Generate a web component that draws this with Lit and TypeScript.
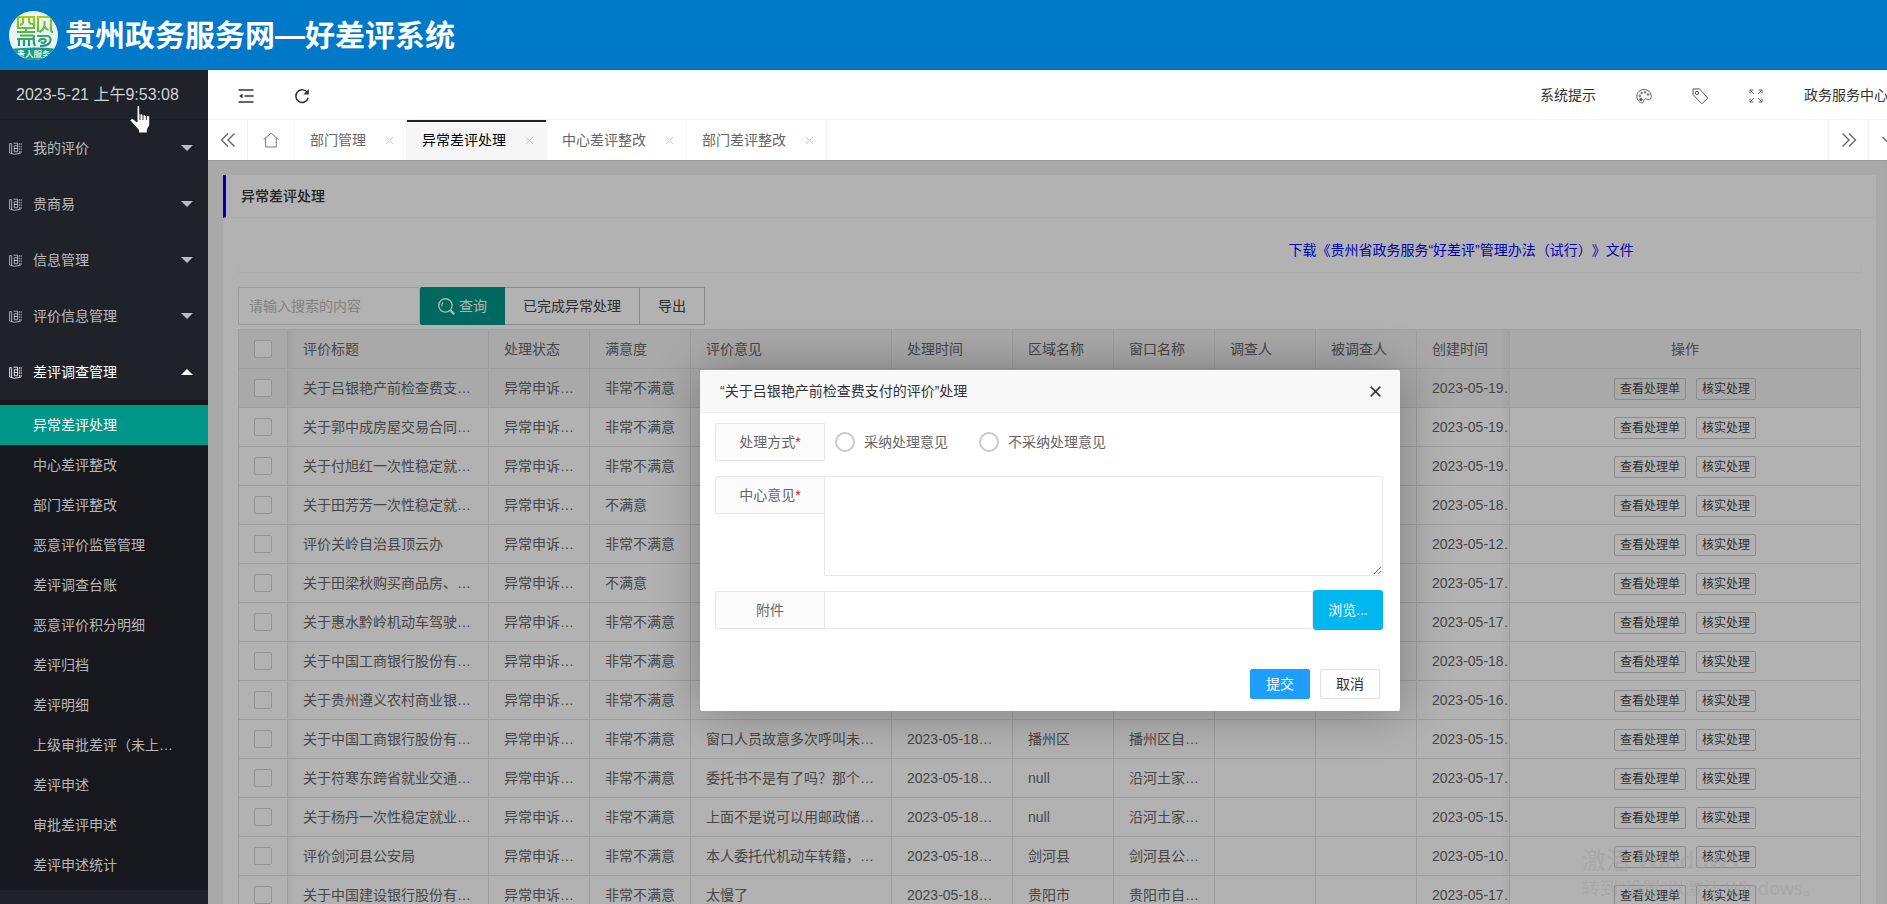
import { LitElement, html, css, svg } from "lit";
import { customElement, state } from "lit/decorators.js";
import { classMap } from "lit/directives/class-map.js";

interface Row {
  title: string;
  status: string;
  level: string;
  opinion: string;
  handled: string;
  area: string;
  windowName: string;
  created: string;
}

const row = (
  title: string,
  level: string,
  created: string,
  opinion = "",
  handled = "",
  area = "",
  windowName = ""
): Row => ({ title, status: "异常申诉…", level, opinion, handled, area, windowName, created });

const ROWS: Row[] = [
  row("关于吕银艳产前检查费支…", "非常不满意", "2023-05-19…"),
  row("关于郭中成房屋交易合同…", "非常不满意", "2023-05-19…"),
  row("关于付旭红一次性稳定就…", "非常不满意", "2023-05-19…"),
  row("关于田芳芳一次性稳定就…", "不满意", "2023-05-18…"),
  row("评价关岭自治县顶云办", "非常不满意", "2023-05-12…"),
  row("关于田梁秋购买商品房、…", "不满意", "2023-05-17…"),
  row("关于惠水黔岭机动车驾驶…", "非常不满意", "2023-05-17…"),
  row("关于中国工商银行股份有…", "非常不满意", "2023-05-18…"),
  row("关于贵州遵义农村商业银…", "非常不满意", "2023-05-16…"),
  row("关于中国工商银行股份有…", "非常不满意", "2023-05-15…", "窗口人员故意多次呼叫未…", "2023-05-18…", "播州区", "播州区自…"),
  row("关于符寒东跨省就业交通…", "非常不满意", "2023-05-17…", "委托书不是有了吗？那个…", "2023-05-18…", "null", "沿河土家…"),
  row("关于杨丹一次性稳定就业…", "非常不满意", "2023-05-15…", "上面不是说可以用邮政储…", "2023-05-18…", "null", "沿河土家…"),
  row("评价剑河县公安局", "非常不满意", "2023-05-10…", "本人委托代机动车转籍，…", "2023-05-18…", "剑河县", "剑河县公…"),
  row("关于中国建设银行股份有…", "非常不满意", "2023-05-17…", "太慢了", "2023-05-18…", "贵阳市", "贵阳市自…"),
];

const COLUMNS = ["评价标题", "处理状态", "满意度", "评价意见", "处理时间", "区域名称", "窗口名称", "调查人", "被调查人", "创建时间"];
const GROUPS = ["我的评价", "贵商易", "信息管理", "评价信息管理", "差评调查管理"];
const SUBMENU = [
  "异常差评处理", "中心差评整改", "部门差评整改", "恶意评价监管管理", "差评调查台账", "恶意评价积分明细",
  "差评归档", "差评明细", "上级审批差评（未上…", "差评申述", "审批差评申述", "差评申述统计",
];
const TABS = ["部门管理", "异常差评处理", "中心差评整改", "部门差评整改"];

const icon = (size: number, body: unknown, width = 1.2) => html`<svg
  width=${size} height=${size} viewBox="0 0 16 16" fill="none" stroke="currentColor"
  stroke-width=${width} aria-hidden="true">${body}</svg>`;

const bookIcon = icon(13, svg`<path d="M.8 2v11.500M3.300 2.500v11.500M.8 2h2.500M.8 13.500l6 1.700 8-1.700"/><path d="M5.500 1.500h5v10.500H6.500V4.500h4M6.500 8h4"/><path d="M12.800 1.500v12.500M15 1.500v12.500" stroke-dasharray="2 1.200"/>`, 1.1);
const shrinkIcon = icon(16, svg`<path d="M.5 2h15M6.500 8h9M.5 14h15"/><path d="M4.500 5.500v5L1.200 8z" fill="currentColor" stroke="none"/>`, 1.4);
const refreshIcon = icon(16, svg`<path d="M13.600 5A6.300 6.300 0 1 0 14.200 9.800"/><path d="M14.800 1v5.500H9.300z" fill="currentColor" stroke="none"/>`, 1.5);
const leftIcon = icon(16, svg`<path d="M8 1.500L1.500 8 8 14.500M14.500 1.500L8 8l6.500 6.500"/>`, 1.4);
const rightIcon = icon(16, svg`<path d="M8 1.500L14.500 8 8 14.500M1.500 1.500L8 8l-6.500 6.500"/>`, 1.4);
const downIcon = icon(16, svg`<path d="M1.500 5L8 11.500 14.500 5"/>`, 1.4);
const homeIcon = icon(16, svg`<path d="M.5 7.500L8 1.200l7.500 6.300M2.700 6v9h10.600V6"/>`, 0.9);
const paletteIcon = icon(16, svg`<path d="M8 1.500C4 1.500.8 4.500.8 8.500S4 15 6.200 14.800c1.800-.2 1.200-2 1.800-3 .7-1.200 2-.9 3.300-.4 2 .8 3.900.2 3.900-2.900 0-4-3.200-7-7.200-7z"/><circle cx="3.800" cy="8" r=".8"/><circle cx="5.600" cy="5" r=".8"/><circle cx="9" cy="4.300" r=".8"/><circle cx="12" cy="6.500" r=".8"/><circle cx="4.800" cy="11.500" r="1.200" fill="currentColor"/>`, 1);
const tagIcon = icon(16, svg`<path d="M1 1l6.500-.2L15.300 9.500a1 1 0 0 1 0 1.200l-4.800 4.600a1 1 0 0 1-1.300 0L1 6.500z"/><circle cx="5" cy="5" r="1.700"/>`, 1);
const fullIcon = icon(16, svg`<path d="M2 5.500V2h3.500M2 2l4 4M10.500 2H14v3.500M14 2l-4 4M2 10.500V14h3.500M2 14l4-4M10.500 14H14v-3.500M14 14l-4-4"/>`, 0.9);
const searchIcon = icon(17, svg`<circle cx="7" cy="7" r="6.300"/><path d="M3.800 8A3.300 3.300 0 0 1 5 4.200" stroke-width="1"/><path d="M11.700 11.700l3.500 3.500" stroke-width="2.200"/>`, 1.3);
const closeIcon = icon(13, svg`<path d="M2 2l12 12M14 2L2 14"/>`, 1.8);
const smallCloseIcon = icon(9, svg`<path d="M1.500 1.500l13 13M14.500 1.500l-13 13"/>`, 1.6);

@customElement("app-root")
export class AppRoot extends LitElement {
  @state() private activeItem = 0;
  @state() private activeTab = 1;
  @state() private dialogOpen = true;

  static styles = css`
    :host {
      display: flex;
      flex-direction: column;
      height: 100vh;
      overflow: hidden;
      font: 14px/20px "Liberation Sans", "Noto Sans CJK SC", sans-serif;
      text-spacing-trim: space-all;
      color: #666;
      background: #f2f2f2;
    }
    *, *::before, *::after { box-sizing: border-box; }
    button, input, textarea { font: inherit; color: inherit; margin: 0; }
    button { cursor: pointer; padding: 0; border: 0; background: none; }
    a { color: inherit; text-decoration: none; }
    ul { list-style: none; margin: 0; padding: 0; }
    svg { display: block; flex: none; }

    .brand {
      flex: none;
      display: flex;
      align-items: center;
      gap: 6px;
      height: 70px;
      padding: 2px 0 0 9px;
      background: #0079c8;
      color: #fff;
    }
    .brand h1 { margin: 0; font-size: 30px; line-height: 40px; font-weight: 700; }
    .shell { flex: 1; display: flex; min-height: 0; }

    .side { flex: none; width: 208px; overflow: hidden; background: #20222a; color: rgba(255, 255, 255, 0.7); }
    .clock {
      height: 50px;
      padding-left: 16px;
      border-bottom: 1px solid #1b1d23;
      font-size: 16px;
      line-height: 49px;
      color: #d2d2d4;
    }
    .group {
      display: flex;
      align-items: center;
      gap: 11px;
      width: 100%;
      height: 56px;
      padding: 0 15px 0 9px;
      text-align: left;
    }
    .group span { flex: 1; }
    .group.open { color: #fff; }
    .caret { width: 12px; height: 6px; background: currentColor; clip-path: polygon(0 0, 100% 0, 50% 100%); }
    .open .caret { clip-path: polygon(50% 0, 100% 100%, 0 100%); }
    .submenu { padding: 5px 0; background: #17181d; }
    .submenu a { display: block; height: 40px; padding-left: 33px; line-height: 40px; white-space: nowrap; }
    .submenu a.active { background: #009688; color: #fff; }

    .main { flex: 1; display: flex; flex-direction: column; min-width: 0; overflow: hidden; }
    .toolbar {
      flex: none;
      display: flex;
      height: 50px;
      border-bottom: 1px solid #f4f4f4;
      background: #fff;
      color: #333;
    }
    .tool { display: flex; align-items: center; padding: 0 20px; white-space: nowrap; line-height: 50px; }
    .tools-left { display: flex; padding: 2px 0 0 10px; }
    .tools-right { display: flex; margin: 0 -1px 0 auto; }
    .tool.user { padding-right: 0; }
    .tools-right button { padding-top: 2px; color: #555; }

    .tabs { flex: none; display: flex; height: 40px; background: #fff; }
    .cell { flex: none; display: grid; place-items: center; width: 40px; border-right: 1px solid #f4f4f4; }
    .cell.home { width: 47px; }
    .cell.next { margin-left: auto; width: 41px; border-left: 1px solid #f4f4f4; }
    .cell.more { margin-right: -22px; }
    .tab {
      display: flex;
      align-items: center;
      gap: 19px;
      padding: 0 12px 0 15px;
      border-right: 1px solid #f4f4f4;
      white-space: nowrap;
    }
    .tab svg { color: #c2c2c2; }
    .tab.active { background: #f6f6f6; color: #000; box-shadow: inset 0 2px #20222a; }

    .content { position: relative; flex: 1; min-height: 0; overflow: hidden; padding: 15px 11px 0 15px; }
    .panel { background: #fff; min-height: 900px; border-radius: 2px; }
    .panel h2 {
      height: 43px;
      margin: 0;
      padding-left: 15px;
      border-left: 3px solid #00f;
      border-bottom: 1px solid #f6f6f6;
      font-size: 14px;
      font-weight: 500;
      line-height: 42px;
      color: #333;
    }
    .body { padding: 11px 15px; }
    .notice {
      height: 43px;
      margin-bottom: 15px;
      padding-right: 14%;
      border-radius: 2px;
      box-shadow: 0 1px 2px rgba(0, 0, 0, 0.05);
      line-height: 43px;
      text-align: right;
      color: #00f;
    }
    .filter { display: flex; height: 38px; margin-bottom: 4px; }
    .filter input { width: 182px; padding: 0 10px; border: 1px solid #e0e0e0; border-radius: 2px; background: none; outline: 0; }
    .filter input::placeholder { color: #bbb; opacity: 1; }
    .filter button { display: flex; align-items: center; gap: 4px; padding: 0 18px; border: 1px solid #c9c9c9; color: #444; }
    .filter button.query { border: 0; border-radius: 2px 0 0 2px; background: #009688; color: #fff; }
    .filter button.plain { border-left: 0; border-right: 0; }

    table {
      width: 100%;
      table-layout: fixed;
      border-spacing: 0;
      border: solid #e2e2e2;
      border-width: 1px 0 0 1px;
    }
    th, td {
      height: 39px;
      padding: 0 15px;
      border: solid #e2e2e2;
      border-width: 0 1px 1px 0;
      font-weight: 400;
      text-align: left;
      white-space: nowrap;
      overflow: hidden;
    }
    thead, .hover { background: #f2f2f2; }
    td:nth-child(2), th:nth-child(2) { background: linear-gradient(to right, rgba(0, 0, 0, 0.04), transparent 8px) no-repeat; }
    td:nth-child(11), th:nth-child(11) { padding-right: 0; background: linear-gradient(to left, rgba(0, 0, 0, 0.04), transparent 8px) no-repeat; }
    .c50 { width: 49px; }
    .c90 { width: 93px; }
    .c100 { width: 101px; }
    .c120 { width: 121px; }
    .c200 { width: 201px; }
    th.ops { text-align: center; }
    .actions { display: flex; justify-content: center; gap: 10px; padding-top: 1px; }
    .actions button {
      height: 22px;
      padding: 0 5px;
      border: 1px solid #c9c9c9;
      border-radius: 2px;
      background: none;
      font-size: 12px;
      line-height: 20px;
      color: #444;
    }
    input[type="checkbox"] {
      appearance: none;
      display: block;
      width: 18px;
      height: 18px;
      border: 1px solid #d2d2d2;
      border-radius: 2px;
      background: #fff;
    }
    input[type="checkbox"]:checked { background: #009688; }

    .shade { position: absolute; inset: 0; background: rgba(0, 0, 0, 0.3); box-shadow: inset 0 2px 2px -1px rgba(0, 0, 0, 0.1); }
    .dialog {
      position: absolute;
      top: 210px;
      left: 492px;
      width: 700px;
      border-radius: 2px;
      background: #fff;
      box-shadow: 1px 1px 50px rgba(0, 0, 0, 0.3);
    }
    .dialog header {
      display: flex;
      align-items: center;
      justify-content: space-between;
      height: 43px;
      padding: 0 18px 0 20px;
      border-bottom: 1px solid #eee;
      border-radius: 2px 2px 0 0;
      background: #f8f8f8;
      color: #333;
    }
    .form { display: flex; flex-direction: column; gap: 15px; padding: 10px 17px 0 15px; }
    .field { display: flex; align-items: flex-start; }
    .label {
      flex: none;
      width: 110px;
      height: 38px;
      border: 1px solid #e6e6e6;
      border-radius: 2px 0 0 2px;
      background: #fbfbfb;
      line-height: 36px;
      text-align: center;
    }
    .label i { color: #f00; font-style: normal; }
    .options { display: flex; gap: 31px; padding-left: 10px; }
    .option { display: flex; align-items: center; gap: 9px; height: 38px; }
    .option input {
      appearance: none;
      width: 20px;
      height: 20px;
      border: 2px solid #c9c9c9;
      border-radius: 50%;
    }
    .option input:checked { border-color: #5fb878; }
    .box { flex: 1; min-width: 0; height: 38px; margin-left: -1px; border: 1px solid #e6e6e6; border-radius: 0 2px 2px 0; background: #fff; outline: 0; }
    textarea.box { height: 100px; padding: 6px 10px; resize: vertical; }
    .browse { height: 40px; margin: -1px 0; padding: 0 15px; border-radius: 3px; background: #00b7ee; color: #fff; }
    .dialog footer { display: flex; justify-content: flex-end; gap: 10px; padding: 40px 20px 12px; }
    .dialog footer button { width: 60px; height: 30px; border: 1px solid #dedede; border-radius: 2px; color: #333; }
    .dialog footer .primary { border-color: #1e9fff; background: #1e9fff; color: #fff; }

    .watermark {
      position: absolute;
      right: 72px;
      bottom: 4px;
      width: 233px;
      font: 18px/24px "Noto Sans", "Noto Sans CJK SC", sans-serif;
      white-space: nowrap;
      color: rgba(160, 160, 160, 0.55);
      pointer-events: none;
    }
    .watermark strong { display: block; font-size: 24px; line-height: 32px; font-weight: 400; }
    .pointer { position: absolute; left: 129px; top: 104px; pointer-events: none; }
  `;

  private renderLogo() {
    return html`<svg width="50" height="50" viewBox="0 0 50 50" aria-hidden="true">
      <defs>
        <linearGradient id="leaf" gradientUnits="userSpaceOnUse" x1="0" y1="5" x2="0" y2="36">
          <stop offset="0" stop-color="#a9cc10" /><stop offset=".5" stop-color="#5db548" /><stop offset="1" stop-color="#129084" />
        </linearGradient>
        <clipPath id="disc"><circle cx="24.500" cy="24.500" r="24.500" /></clipPath>
      </defs>
      <g clip-path="url(#disc)">
        <rect width="50" height="50" fill="#eaf3f8" />
        <path d="M0 38q25-3 50 0v13H0z" fill="#1d9a80" />
        <g fill="none" stroke="url(#leaf)" stroke-width="2.200">
          <path d="M9 6h16v11H9zM14 6v5q0 2-3 3M20 6v4q0 3 4 3M17 17v4M8 21h18M11 24.500h13M8 28h17M10 28v7M15 28v7M20 28v7M25 24q-1 7 1 11" />
          <path d="M29 21V6h13v13q0 2 2 2M35.500 10v5q-1 4-5 6M35.500 15q1 3 4 4M28 25h11q4 2 2 6-2 4-10 4M30 31q1-4 5-3 3 1 1 3-2 2-4 0" />
        </g>
        <text x="24.500" y="46" text-anchor="middle" font-size="8.500" font-family="Noto Sans CJK SC" font-weight="500" fill="#fff">贵人服务</text>
      </g>
    </svg>`;
  }

  private renderSide() {
    return html`<nav class="side">
      <div class="clock">2023-5-21 上午9:53:08</div>
      ${GROUPS.map((name, i) => html`<button class=${classMap({ group: true, open: i === GROUPS.length - 1 })}>
        ${bookIcon}<span>${name}</span><i class="caret"></i>
      </button>`)}
      <ul class="submenu">
        ${SUBMENU.map((name, i) => html`<li><a href="#" class=${classMap({ active: i === this.activeItem })}
          @click=${(e: Event) => { e.preventDefault(); this.activeItem = i; }}>${name}</a></li>`)}
      </ul>
    </nav>`;
  }

  private renderBars() {
    return html`<div class="toolbar">
        <div class="tools-left">
          <button class="tool" aria-label="收起菜单">${shrinkIcon}</button>
          <button class="tool" aria-label="刷新">${refreshIcon}</button>
        </div>
        <div class="tools-right">
          <a class="tool" href="#">系统提示</a>
          <button class="tool" aria-label="主题">${paletteIcon}</button>
          <button class="tool" aria-label="便签">${tagIcon}</button>
          <button class="tool" aria-label="全屏">${fullIcon}</button>
          <a class="tool user" href="#">政务服务中心</a>
        </div>
      </div>
      <div class="tabs">
        <button class="cell" aria-label="向左">${leftIcon}</button>
        <button class="cell home" aria-label="主页">${homeIcon}</button>
        ${TABS.map((name, i) => html`<button class=${classMap({ tab: true, active: i === this.activeTab })}
          @click=${() => (this.activeTab = i)}>${name}${smallCloseIcon}</button>`)}
        <button class="cell next" aria-label="向右">${rightIcon}</button>
        <button class="cell more" aria-label="更多">${downIcon}</button>
      </div>`;
  }

  private renderTable() {
    return html`<table>
      <colgroup>
        <col class="c50" /><col class="c200" /><col class="c100" /><col class="c100" /><col class="c200" />
        <col class="c120" /><col class="c100" /><col class="c100" /><col class="c100" /><col class="c100" />
        <col class="c90" /><col />
      </colgroup>
      <thead>
        <tr>
          <th><input type="checkbox" aria-label="全选" /></th>
          ${COLUMNS.map((name) => html`<th>${name}</th>`)}
          <th class="ops">操作</th>
        </tr>
      </thead>
      <tbody>
        ${ROWS.map((r, i) => html`<tr class=${classMap({ hover: i === 0 })}>
          <td><input type="checkbox" aria-label=${r.title} /></td>
          <td>${r.title}</td><td>${r.status}</td><td>${r.level}</td><td>${r.opinion}</td>
          <td>${r.handled}</td><td>${r.area}</td><td>${r.windowName}</td><td></td><td></td>
          <td>${r.created}</td>
          <td><div class="actions"><button>查看处理单</button><button>核实处理</button></div></td>
        </tr>`)}
      </tbody>
    </table>`;
  }

  private renderDialog() {
    const close = () => (this.dialogOpen = false);
    return html`<div class="shade"></div>
      <section class="dialog" role="dialog" aria-labelledby="dialog-title">
        <header>
          <span id="dialog-title">“关于吕银艳产前检查费支付的评价”处理</span>
          <button aria-label="关闭" @click=${close}>${closeIcon}</button>
        </header>
        <div class="form">
          <div class="field" role="radiogroup" aria-labelledby="mode-label">
            <span class="label" id="mode-label">处理方式<i>*</i></span>
            <div class="options">
              <label class="option"><input type="radio" name="mode" />采纳处理意见</label>
              <label class="option"><input type="radio" name="mode" />不采纳处理意见</label>
            </div>
          </div>
          <div class="field">
            <label class="label" for="opinion">中心意见<i>*</i></label>
            <textarea class="box" id="opinion"></textarea>
          </div>
          <div class="field">
            <label class="label" for="attachment">附件</label>
            <input class="box" id="attachment" type="text" />
            <button class="browse">浏览...</button>
          </div>
        </div>
        <footer>
          <button class="primary" @click=${close}>提交</button>
          <button @click=${close}>取消</button>
        </footer>
      </section>`;
  }

  render() {
    return html`<header class="brand">${this.renderLogo()}<h1>贵州政务服务网—好差评系统</h1></header>
      <div class="shell">
        ${this.renderSide()}
        <div class="main">
          ${this.renderBars()}
          <main class="content">
            <div class="panel">
              <h2>异常差评处理</h2>
              <div class="body">
                <div class="notice"><a href="#">下载《贵州省政务服务“好差评”管理办法（试行）》文件</a></div>
                <div class="filter">
                  <input type="text" aria-label="搜索" placeholder="请输入搜索的内容" />
                  <button class="query">${searchIcon}查询</button>
                  <button class="plain">已完成异常处理</button>
                  <button>导出</button>
                </div>
                ${this.renderTable()}
              </div>
            </div>
            ${this.dialogOpen ? this.renderDialog() : ""}
          </main>
        </div>
      </div>
      <div class="watermark"><strong>激活 Windows</strong>转到“设置”以激活 Windows。</div>
      <svg class="pointer" width="24" height="32" viewBox="0 0 24 32" aria-hidden="true">
        <path d="M8 2q1.500-1.200 2.800 0v8q2-.8 3 .8 2-.6 3 1 3-.8 4 1.200V21l-2.500 4.500V29H9.500v-3L4.500 20.500 1 16.500q0-2.500 3-1.800L8 18z" fill="#fff" stroke="#1a1b22" stroke-width="1" />
        <path d="M11 10v6M14 11v5M17.300 12v4" stroke="#1a1b22" stroke-width=".9" />
      </svg>`;
  }
}
